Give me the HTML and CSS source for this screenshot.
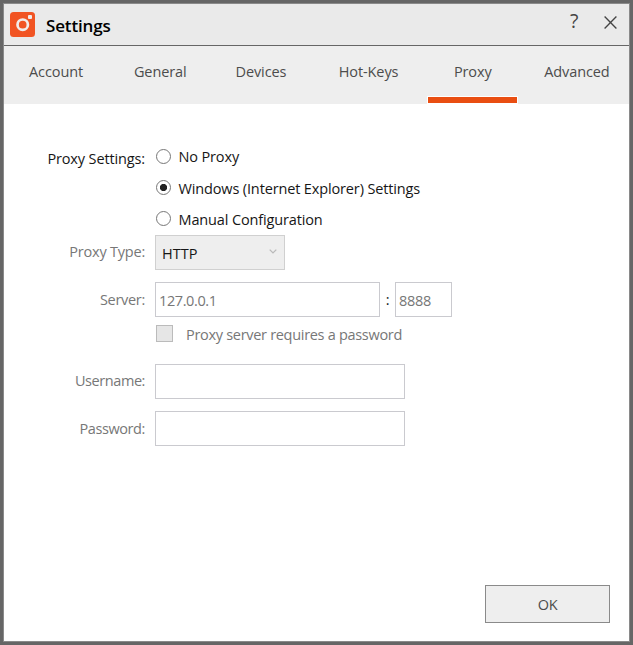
FILE: index.html
```html
<!DOCTYPE html>
<html lang="en">
<head>
<meta charset="utf-8">
<title>Settings</title>
<link rel="stylesheet" href="styles.css">
</head>
<body>
<div class="window">
  <header class="titlebar">
    <svg class="logo" width="25" height="25" viewBox="0 0 25 25">
      <rect width="25" height="25" rx="3.5" fill="#f15423"/>
      <circle cx="12.7" cy="12.7" r="5.2" fill="none" stroke="#f1ecea" stroke-width="2.7"/>
      <rect x="18" y="3" width="4" height="4" rx="1" fill="#f1ecea"/>
    </svg>
    <h1 class="title">Settings</h1>
    <span class="help">?</span>
    <svg class="close" width="13" height="13" viewBox="0 0 13 13"><path d="M.6.6 12.4 12.4M12.4.6.6 12.4" stroke="#444" stroke-width="1.35"/></svg>
  </header>
  <nav class="tabs">
    <span class="tab">Account</span>
    <span class="tab">General</span>
    <span class="tab tab-devices">Devices</span>
    <span class="tab">Hot-Keys</span>
    <span class="tab active">Proxy</span>
    <span class="tab">Advanced</span>
  </nav>
  <main class="form">
    <div class="row row-mode">
      <span class="label dark">Proxy Settings:</span>
      <div class="radios">
        <div class="option"><i class="radio"></i><span>No Proxy</span></div>
        <div class="option"><i class="radio checked"></i><span>Windows (Internet Explorer) Settings</span></div>
        <div class="option"><i class="radio"></i><span>Manual Configuration</span></div>
      </div>
    </div>
    <div class="row row-type">
      <span class="label">Proxy Type:</span>
      <div class="select"><span>HTTP</span><svg width="8" height="5" viewBox="0 0 8 5"><path d="M.7.6 4 3.9 7.3.6" fill="none" stroke="#b9b9b9" stroke-width="1.3"/></svg></div>
    </div>
    <div class="row row-server">
      <span class="label">Server:</span>
      <div class="field host">127.0.0.1</div>
      <span class="colon">:</span>
      <div class="field port">8888</div>
    </div>
    <div class="check-row"><i class="checkbox"></i><span>Proxy server requires a password</span></div>
    <div class="row row-user">
      <span class="label">Username:</span>
      <div class="field wide"></div>
    </div>
    <div class="row row-pass">
      <span class="label">Password:</span>
      <div class="field wide"></div>
    </div>
  </main>
  <footer class="footer"><div class="button">OK</div></footer>
</div>
</body>
</html>
```
FILE: styles.css
```css
* { box-sizing: border-box; }
body {
  margin: 0;
  font: 14.5px/20px "Open Sans", "Noto Sans", sans-serif;
  letter-spacing: -0.3px;
  color: #161616;
  white-space: nowrap;
}
.window {
  display: flex;
  flex-direction: column;
  width: 633px;
  height: 645px;
  border: 3px solid #666;
  box-shadow: inset 0 0 0 1px #8a8a8a;
  padding: 1px;
}
.titlebar {
  display: flex;
  align-items: center;
  height: 42px;
  padding: 0 12px 0 6px;
  background: #eaeaea;
  border-bottom: 1px solid #666;
}
.title {
  margin: 2px 0 0 11px;
  font-size: 17px;
  font-weight: 600;
  letter-spacing: -0.15px;
  color: #000;
}
.help {
  margin: -8px 26px 0 auto;
  font-size: 19.5px;
  color: #444;
}
.close { margin-top: -5px; }
.tabs {
  display: grid;
  grid-template-columns: repeat(6, 1fr);
  height: 58px;
  background: #eee;
  color: #4c4c4c;
  letter-spacing: -0.1px;
}
.tab {
  display: flex;
  flex-direction: column;
  align-items: center;
  padding-top: 16px;
}
.tab-devices { padding-right: 7px; }
.active::after {
  content: "";
  width: 89px;
  height: 6px;
  margin-top: 15px;
  background: #e94e12;
  box-shadow: 0 0 0 1px #fff;
}
.form { flex: 1; padding-top: 43px; }
.row { display: flex; }
.label {
  width: 141px;
  margin-right: 10px;
  text-align: right;
  color: #777;
}
.label.dark {
  padding-top: 2px;
  color: #161616;
  letter-spacing: -0.13px;
}
.row-mode { height: 88px; }
.option {
  display: flex;
  align-items: flex-start;
  height: 31px;
  padding-left: 1px;
  letter-spacing: -0.14px;
}
.option span { margin-left: 7.5px; }
.option + .option span { margin-top: 1px; }
.radio {
  width: 15px;
  height: 15px;
  margin-top: 2px;
  border: 1px solid #777;
  border-radius: 50%;
}
.checked { background: radial-gradient(circle, #222 3.2px, #fff 4px); }
.row-type { height: 47px; }
.row-type .label { padding-top: 7px; letter-spacing: -0.22px; }
.select {
  display: flex;
  align-items: center;
  justify-content: space-between;
  width: 130px;
  height: 35px;
  padding: 2px 7px 0 6px;
  border: 1px solid #d0d0d0;
  background: #eee;
  letter-spacing: 0;
}
.select svg { margin-top: -5px; }
.row-server .label { padding-top: 8px; }
.field {
  height: 35px;
  padding: 8px 3px;
  border: 1px solid #cacacf;
  background: #fff;
  color: #777;
}
.host { width: 225px; letter-spacing: -0.4px; }
.port { width: 57px; }
.colon { width: 15px; padding-top: 8px; text-align: center; }
.check-row {
  display: flex;
  height: 47px;
  padding: 8px 0 0 152px;
  color: #777;
}
.checkbox {
  width: 17px;
  height: 17px;
  margin: 0 13px 0 0;
  border: 1px solid #bbb;
  background: #e6e6e6;
}
.wide { width: 250px; }
.row-user { height: 47px; }
.row-user .label { padding-top: 7px; letter-spacing: -0.42px; }
.row-pass .label { padding-top: 8px; letter-spacing: -0.4px; }
.footer {
  display: flex;
  justify-content: flex-end;
  padding: 0 19px 18px 0;
}
.button {
  width: 125px;
  height: 38px;
  border: 1px solid #8a8a8a;
  background: #eee;
  color: #4c4c4c;
  line-height: 37px;
  text-align: center;
}
```
